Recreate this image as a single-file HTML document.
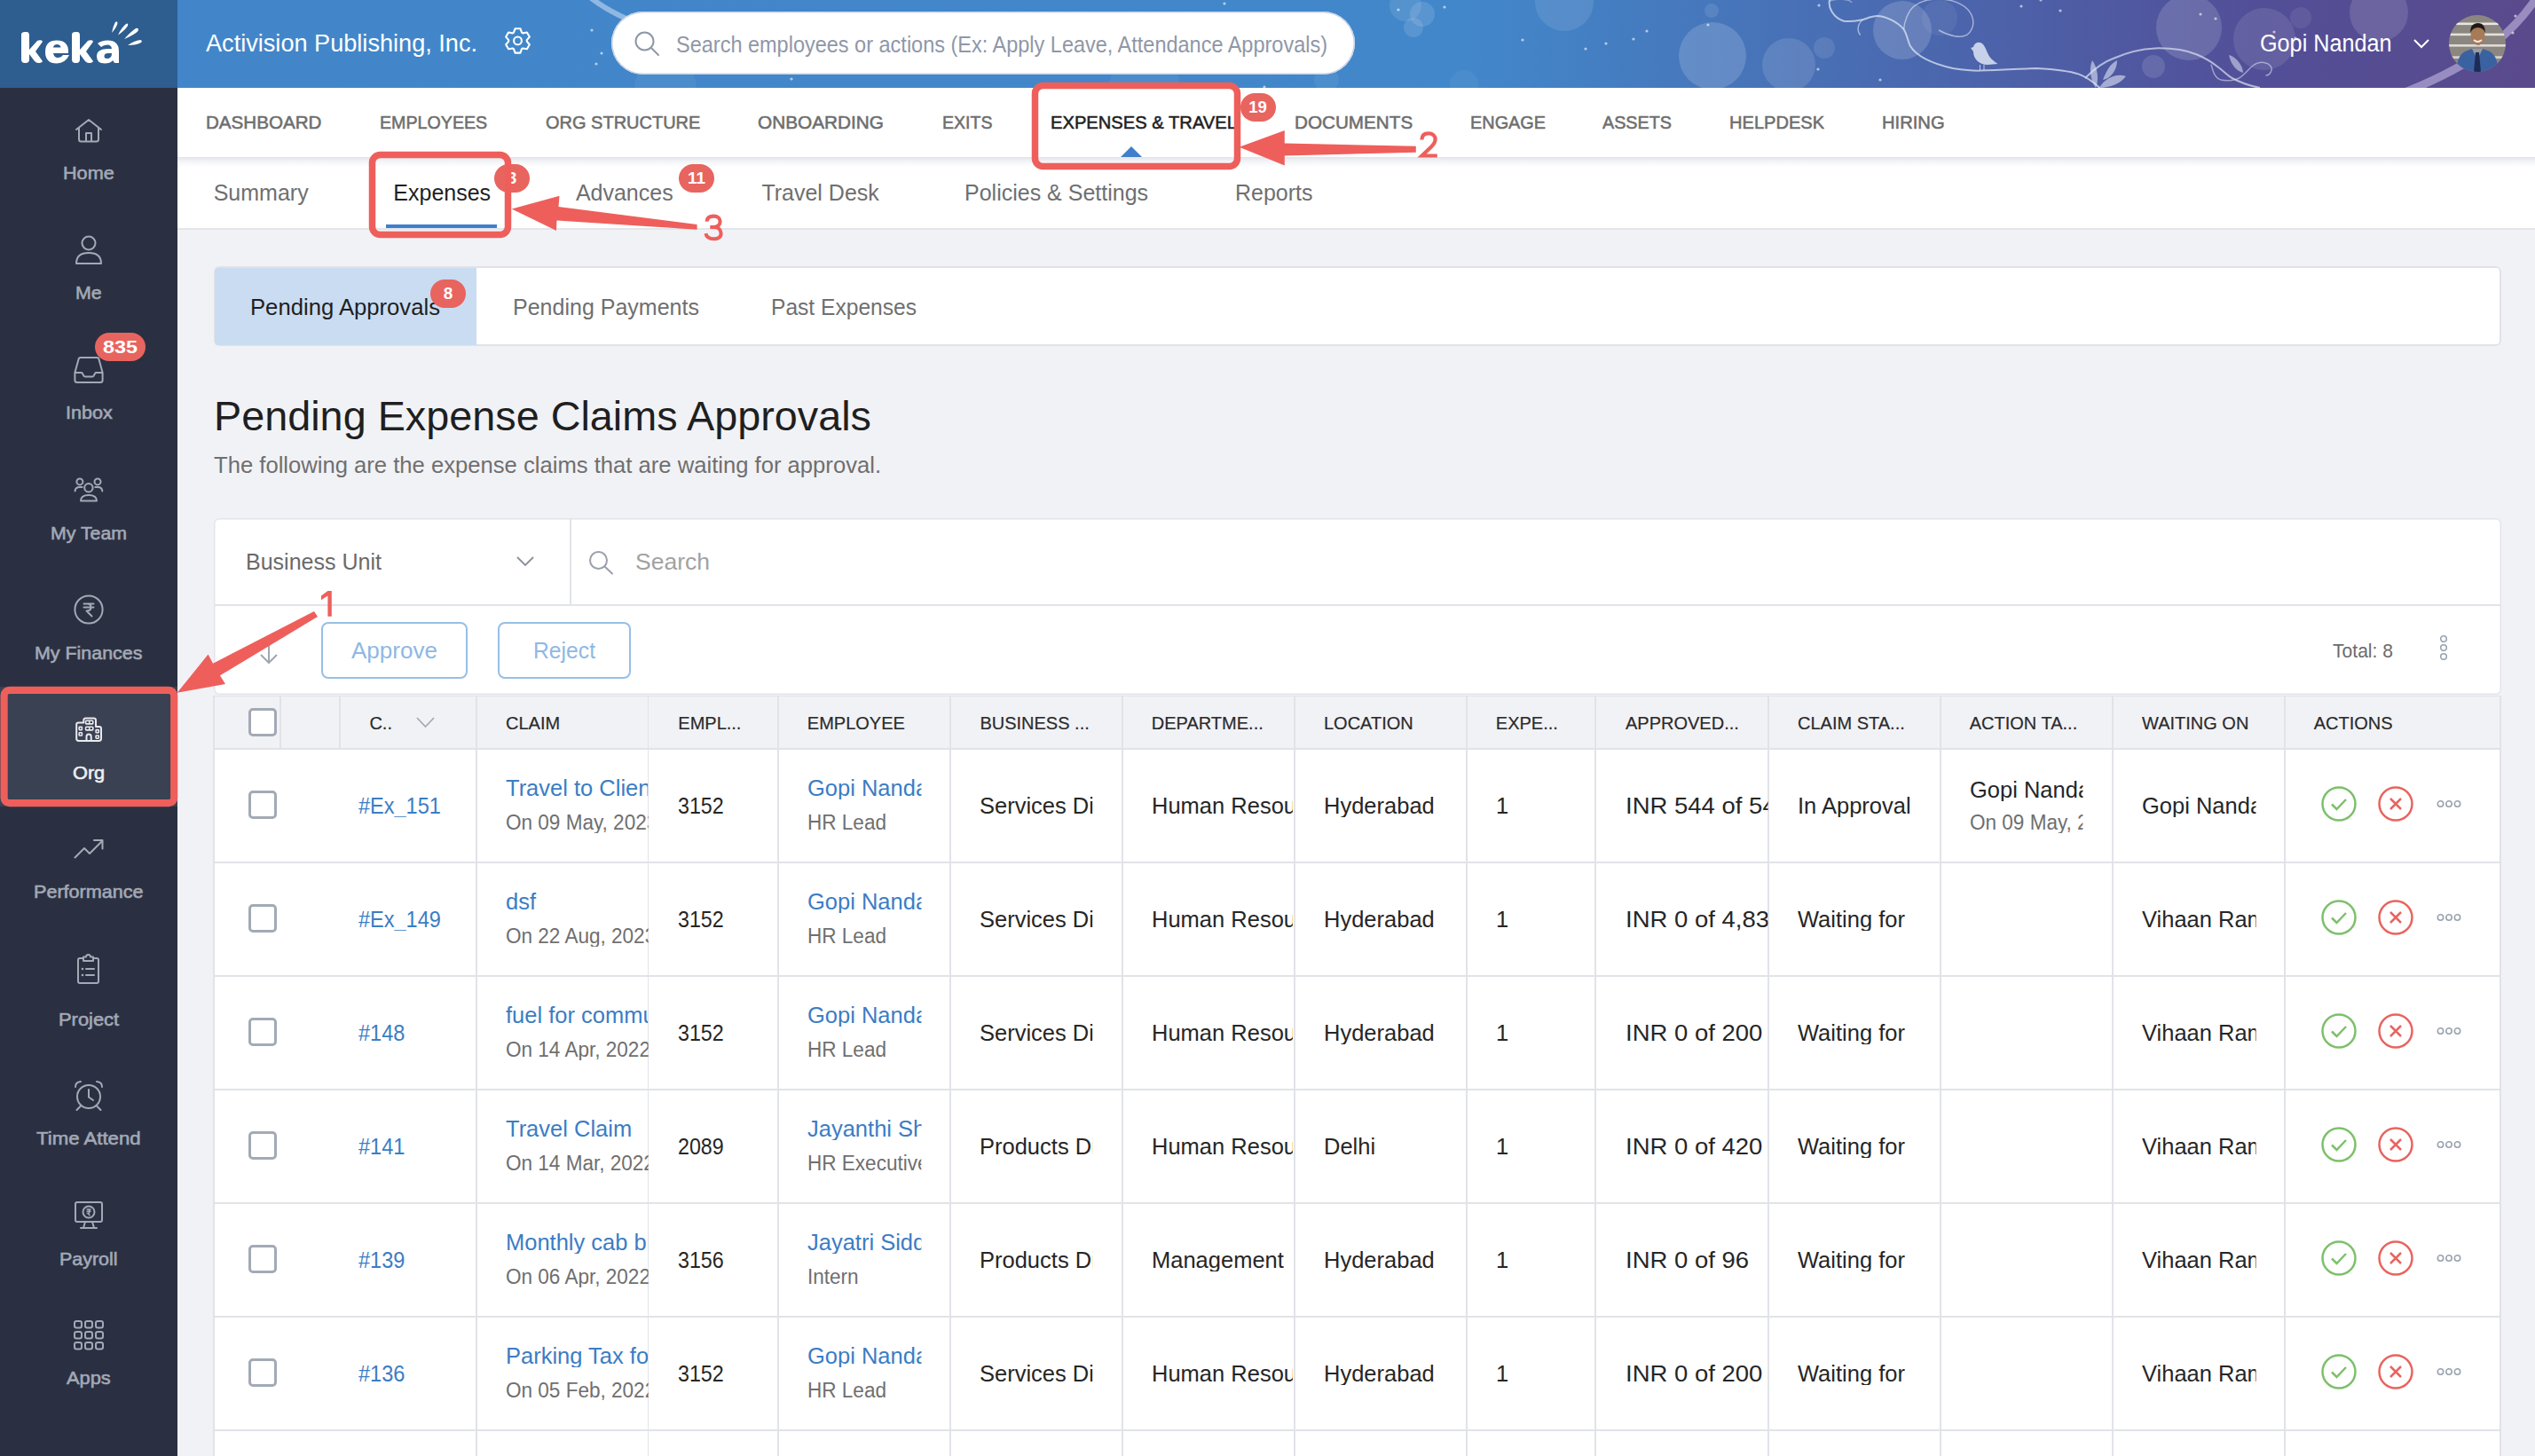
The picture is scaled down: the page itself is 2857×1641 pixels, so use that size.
<!DOCTYPE html>
<html><head><meta charset="utf-8">
<style>
html,body{margin:0;padding:0;}
body{width:2857px;height:1641px;position:relative;overflow:hidden;background:#f1f2f6;font-family:"Liberation Sans", sans-serif;}
.t{position:absolute;white-space:nowrap;line-height:1;}
svg{position:absolute;overflow:visible;}
</style></head><body>

<div style="position:absolute;left:0px;top:0px;width:200px;height:99px;background:#2e5d8f"></div>
<div style="position:absolute;left:200px;top:0px;width:2657px;height:99px;background:linear-gradient(90deg,#4286c9 0%,#4287ca 55%,#4b66ad 75%,#524f98 88%,#5a4a8c 100%)"></div>
<svg style="left:0;top:0" width="2857" height="99" viewBox="0 0 2857 99"><circle cx="1930" cy="63" r="38" fill="#ffffff" fill-opacity="0.16"/><circle cx="2016" cy="73" r="30" fill="#ffffff" fill-opacity="0.12"/><circle cx="2144" cy="34" r="33" fill="#ffffff" fill-opacity="0.16"/><circle cx="2186" cy="20" r="20" fill="#ffffff" fill-opacity="0.06"/><circle cx="1763" cy="2" r="33" fill="#ffffff" fill-opacity="0.1"/><circle cx="1603" cy="16" r="14" fill="#ffffff" fill-opacity="0.12"/><circle cx="1593" cy="31" r="11" fill="#ffffff" fill-opacity="0.12"/><circle cx="1584" cy="6" r="18" fill="#ffffff" fill-opacity="0.1"/><circle cx="1929" cy="12" r="8" fill="#ffffff" fill-opacity="0.1"/><circle cx="2056" cy="54" r="12" fill="#ffffff" fill-opacity="0.1"/><circle cx="2467" cy="31" r="37" fill="#ffffff" fill-opacity="0.15"/><circle cx="2552" cy="44" r="35" fill="#ffffff" fill-opacity="0.1"/><circle cx="2593" cy="20" r="12" fill="#ffffff" fill-opacity="0.08"/><circle cx="2681" cy="14" r="33" fill="#ffffff" fill-opacity="0.13"/><circle cx="2427" cy="75" r="13" fill="#ffffff" fill-opacity="0.12"/><circle cx="1650" cy="95" r="16" fill="#ffffff" fill-opacity="0.05"/><circle cx="750" cy="99" r="35" fill="#ffffff" fill-opacity="0.05"/><circle cx="1290" cy="99" r="40" fill="#ffffff" fill-opacity="0.05"/><circle cx="1495" cy="90" r="14" fill="#ffffff" fill-opacity="0.06"/><path d="M2062 0 C2060 8 2066 20 2078 23.7 C2088 25 2094 23 2100 22 C2106 20 2110 18 2115.7 18 C2124 18 2138 24 2145.6 33 C2150 40 2150 47 2153 52 C2158 60 2170 70 2200.8 77 C2215 79 2225 80 2232 79.6 C2260 79 2280 77 2295.5 77 C2315 78 2332 80 2343 83.6 C2352 87 2360 93 2366.5 99" stroke="#dde4f4" stroke-opacity="0.75" stroke-width="2" fill="none"/><path d="M2145.6 33 C2146 26 2150 12 2158 6.3 C2165 1 2172 -1 2185 -1 C2205 -1 2218 8 2222 17 C2226 26 2223 35 2216.6 39.4 C2210 43 2197 41 2185 34" stroke="#dde4f4" stroke-opacity="0.6" stroke-width="1.5" fill="none"/><path d="M2100 22 C2094 26 2092 34 2096.7 39.4" stroke="#dde4f4" stroke-opacity="0.6" stroke-width="1.5" fill="none"/><path d="M2062 1 C2070 -2 2085 -1 2087 3" stroke="#dde4f4" stroke-opacity="0.5" stroke-width="1.5" fill="none"/><path d="M2350 88 C2360 78 2370 70 2381.5 66 C2395 60 2412 55 2429 54.4 C2448 54 2465 57 2476 61.5 C2487 66 2494 71 2500 75.7 C2506 80 2510 85 2515.6 88 C2525 93 2537 97 2547 99" stroke="#dde4f4" stroke-opacity="0.7" stroke-width="2" fill="none"/><path d="M2492 72.6 C2494 80 2496 88 2503 90 C2512 92 2520 90 2523.5 88 C2530 84 2535 77 2539 74 C2544 70 2550 70 2553.5 71 C2558 72 2561 76 2560 79 C2559 83 2556 85 2553.5 85" stroke="#dde4f4" stroke-opacity="0.55" stroke-width="1.5" fill="none"/><path d="M2866 -14 C2840 30 2800 70 2700 108" stroke="#cdc3ea" stroke-opacity="0.55" stroke-width="9" fill="none"/><path d="M664 -4 C676 6 690 14 708 22" stroke="#cfe0f5" stroke-opacity="0.55" stroke-width="6" fill="none"/><path d="M2221 54 L2224 53 C2225 48 2231 46 2235 50 C2239 55 2240 62 2244 66 C2247 69 2250 71 2251.5 72 L2240 73 C2230 73 2224 66 2224 58 Z" fill="#dde4f4" fill-opacity="0.85"/><path d="M2231.5 73 V79 M2236 73 V79" stroke="#dde4f4" stroke-opacity="0.8" stroke-width="1"/><path d="M2512 62 C2520 64 2528 74 2528 82 C2520 80 2514 72 2512 62 Z" fill="#dde4f4" fill-opacity="0.55"/><path d="M2358 68 C2354 78 2356 90 2362 99 C2366 90 2364 76 2358 68 Z M2366 99 C2372 88 2386 82 2396 86 C2390 94 2378 99 2366 99 Z M2370 90 C2374 80 2378 72 2386 68 C2386 78 2380 88 2370 90 Z" fill="#dde4f4" fill-opacity="0.6"/><circle cx="1576" cy="11" r="1.6" fill="#ffffff" fill-opacity="0.6"/><circle cx="1628" cy="8" r="1.6" fill="#ffffff" fill-opacity="0.6"/><circle cx="1716" cy="45" r="1.6" fill="#ffffff" fill-opacity="0.6"/><circle cx="1787" cy="55" r="1.6" fill="#ffffff" fill-opacity="0.6"/><circle cx="1810" cy="49" r="1.6" fill="#ffffff" fill-opacity="0.6"/><circle cx="1841" cy="44" r="1.6" fill="#ffffff" fill-opacity="0.6"/><circle cx="1856" cy="35" r="1.6" fill="#ffffff" fill-opacity="0.6"/><circle cx="1925" cy="28" r="1.6" fill="#ffffff" fill-opacity="0.6"/><circle cx="2050" cy="6" r="1.6" fill="#ffffff" fill-opacity="0.6"/><circle cx="2049" cy="78" r="1.6" fill="#ffffff" fill-opacity="0.6"/><circle cx="2119" cy="90" r="1.6" fill="#ffffff" fill-opacity="0.6"/><circle cx="2278" cy="7" r="1.6" fill="#ffffff" fill-opacity="0.6"/><circle cx="2300" cy="0" r="1.6" fill="#ffffff" fill-opacity="0.6"/><circle cx="2322" cy="12" r="1.6" fill="#ffffff" fill-opacity="0.6"/><circle cx="2480" cy="16" r="1.6" fill="#ffffff" fill-opacity="0.6"/><circle cx="2497" cy="21" r="1.6" fill="#ffffff" fill-opacity="0.6"/><circle cx="2563" cy="36" r="1.6" fill="#ffffff" fill-opacity="0.6"/><circle cx="2587" cy="43" r="1.6" fill="#ffffff" fill-opacity="0.6"/><circle cx="2835" cy="18" r="1.6" fill="#ffffff" fill-opacity="0.6"/><circle cx="2832" cy="37" r="1.6" fill="#ffffff" fill-opacity="0.6"/><circle cx="667" cy="34" r="1.6" fill="#ffffff" fill-opacity="0.6"/><circle cx="678" cy="60" r="1.6" fill="#ffffff" fill-opacity="0.6"/><circle cx="672" cy="72" r="1.6" fill="#ffffff" fill-opacity="0.6"/><circle cx="892" cy="89" r="1.6" fill="#ffffff" fill-opacity="0.6"/><circle cx="1380" cy="4" r="1.6" fill="#ffffff" fill-opacity="0.6"/><circle cx="1425" cy="98" r="1.6" fill="#ffffff" fill-opacity="0.6"/><circle cx="1476" cy="50" r="1.6" fill="#ffffff" fill-opacity="0.6"/><circle cx="1512" cy="59" r="1.6" fill="#ffffff" fill-opacity="0.6"/></svg>
<svg style="left:0;top:0" width="200" height="99" viewBox="0 0 200 99">
<g fill="#ffffff">
<path d="M24 39 Q24 36 28 36 L30 36 Q33 36 33 40 L33 56 L42 46 Q44 45 47 45.5 L48 47 L40 58 L48 69 Q47 71 43 71 Q41 71 39 69 L33 61 L33 67 Q33 71 29 71 L28 71 Q24 71 24 67 Z"/>
<path d="M78 62 Q74 71 64 71.5 Q51 71.5 51 58.5 Q51 45.5 64 45.5 Q77 45.5 77 58 L77 60 L60 60 Q61 65 65 65 Q69 65 71 62 Z M60 53.5 L68.5 53.5 Q68 50 64.2 50 Q60.5 50 60 53.5 Z"/>
<path d="M81 39 Q81 36 85 36 L87 36 Q90 36 90 40 L90 56 L99 46 Q101 45 104 45.5 L105 47 L97 58 L105 69 Q104 71 100 71 Q98 71 96 69 L90 61 L90 67 Q90 71 86 71 L85 71 Q81 71 81 67 Z"/>
<path d="M134 71 L130 71 Q128 71 127.5 68 Q124 71.5 118 71.5 Q109 71.5 109 63.5 Q109 55 122 55 L126 55 Q125.5 50.5 121 50.5 Q116.5 50.5 114 53 L110 49 Q114 45.5 121.5 45.5 Q134 45.5 134 58 Z M126 60 L121.5 60 Q117.5 60 117.5 63.5 Q117.5 66 120.5 66 Q126 66 126 60 Z"/>
<path d="M126 37 Q128 28 130 25 Q132 23 132.5 26 Q132 30 126 37 Z"/>
<path d="M133 39.5 Q137 31 142 27 Q145 25.5 144 29 Q141 34 133 39.5 Z"/>
<path d="M140 44 Q147 36 153 32 Q157 31 155.5 35 Q152 39 140 44 Z"/>
<path d="M144 51 Q151 46 158 45 Q161 45.5 159 48 Q154 51 144 51 Z"/>
</g></svg>
<div class="t " style="left:232px;top:36.44px;font-size:27px;color:#ffffff;font-weight:400;transform:scaleX(1.0044);transform-origin:0 0;">Activision Publishing, Inc.</div>
<svg style="left:0;top:0" width="700" height="99" viewBox="0 0 700 99"><path d="M578.98 36.64 L580.59 32.21 L586.41 32.21 L588.02 36.64 L589.26 37.36 L593.90 36.53 L596.81 41.57 L593.77 45.18 L593.77 46.62 L596.81 50.23 L593.90 55.27 L589.26 54.44 L588.02 55.16 L586.41 59.59 L580.59 59.59 L578.98 55.16 L577.74 54.44 L573.10 55.27 L570.19 50.23 L573.23 46.62 L573.23 45.18 L570.19 41.57 L573.10 36.53 L577.74 37.36 Z" fill="none" stroke="#ffffff" stroke-width="2.1" stroke-linejoin="round"/><circle cx="583.5" cy="45.9" r="4.4" fill="none" stroke="#ffffff" stroke-width="2.1"/></svg>
<div style="position:absolute;left:689px;top:13px;width:838px;height:71px;background:#fff;border-radius:36px;box-shadow:0 0 0 1.5px #c9d3e6 inset"></div>
<svg style="left:714px;top:34px" width="30" height="30" viewBox="0 0 30 30"><circle cx="12.5" cy="12.5" r="10" fill="none" stroke="#8e97a8" stroke-width="2"/><path d="M20 20 L28 28" stroke="#8e97a8" stroke-width="2" stroke-linecap="round"/></svg>
<div class="t " style="left:762px;top:38.04px;font-size:25px;color:#8f97a8;font-weight:400;transform:scaleX(0.9398);transform-origin:0 0;">Search employees or actions (Ex: Apply Leave, Attendance Approvals)</div>
<div class="t " style="left:2547px;top:35.64px;font-size:27px;color:#ffffff;font-weight:400;transform:scaleX(0.9333);transform-origin:0 0;">Gopi Nandan</div>
<svg style="left:2720px;top:44px" width="18" height="11" viewBox="0 0 18 11"><path d="M1 1 L9 9 L17 1" stroke="#fff" stroke-width="2" fill="none"/></svg>
<svg style="left:2760px;top:17px" width="64" height="64" viewBox="0 0 64 64">
<defs><clipPath id="av"><circle cx="32" cy="32" r="32"/></clipPath></defs>
<g clip-path="url(#av)">
<rect width="64" height="64" fill="#8b8780"/>
<rect y="8.5" width="64" height="2.6" fill="#e8e6e2"/><rect y="20.6" width="64" height="2.6" fill="#e3e1dc"/><rect y="33" width="64" height="2.6" fill="#dedcd6"/><rect y="46.3" width="64" height="2.6" fill="#d6d4ce"/>
<path d="M8 64 Q9 46 18 41 L26 38 L38 38 L46 41 Q55 46 56 64 Z" fill="#3b62a0"/>
<path d="M26 38 L32 50 L38 38 Z" fill="#9a9aa6"/>
<path d="M30 42 L34 42 L36 64 L28 64 Z" fill="#1d2d55"/>
<ellipse cx="32.5" cy="23" rx="8" ry="11" fill="#a87a58"/>
<path d="M24 20 Q24 9 32.5 9 Q41 9 41 20 Q38 14 32.5 14 Q27 14 24 20Z" fill="#201812"/>
<path d="M28 28 Q32.5 32 37 28" stroke="#f2ece4" stroke-width="2" fill="none"/>
</g></svg>
<div style="position:absolute;left:0px;top:99px;width:200px;height:1542px;background:#2a3042"></div>
<div style="position:absolute;left:0px;top:774px;width:200px;height:135px;background:#3a4152"></div>
<svg style="left:84px;top:133px" width="32" height="28" viewBox="0 0 32 28"><path fill="none" stroke="#a3a9b5" stroke-width="2" stroke-linecap="round" stroke-linejoin="round" d="M2 13 L16 2 L30 13 M5 11 V24 Q5 26.5 7.5 26.5 H24.5 Q27 26.5 27 24 V11 M13 26.5 V17 H19 V26.5"/></svg>
<svg style="left:84px;top:265px" width="32" height="34" viewBox="0 0 32 34"><circle cx="16" cy="9" r="7.5" fill="none" stroke="#a3a9b5" stroke-width="2" stroke-linecap="round" stroke-linejoin="round"/><path fill="none" stroke="#a3a9b5" stroke-width="2" stroke-linecap="round" stroke-linejoin="round" d="M2 32 Q2 20 16 20 Q30 20 30 32 Z"/></svg>
<svg style="left:83px;top:401px" width="34" height="31" viewBox="0 0 34 31"><path fill="none" stroke="#a3a9b5" stroke-width="2" stroke-linecap="round" stroke-linejoin="round" d="M5.5 4 Q5.8 2 8 2 H26 Q28.2 2 28.5 4 L32.6 19 V27.5 Q32.6 30 30.1 30 H3.9 Q1.4 30 1.4 27.5 V19 Z M1.4 19 H9.3 L11.6 22.8 Q12.3 23.6 13.3 23.6 H20.7 Q21.7 23.6 22.4 22.8 L24.7 19 H32.6"/></svg>
<svg style="left:83px;top:537px" width="34" height="29" viewBox="0 0 34 29"><circle cx="6.9" cy="5.9" r="3.5" fill="none" stroke="#a3a9b5" stroke-width="2" stroke-linecap="round" stroke-linejoin="round"/><circle cx="27" cy="5.9" r="3.5" fill="none" stroke="#a3a9b5" stroke-width="2" stroke-linecap="round" stroke-linejoin="round"/><circle cx="16.9" cy="12.7" r="4.7" fill="none" stroke="#a3a9b5" stroke-width="2" stroke-linecap="round" stroke-linejoin="round"/><path fill="none" stroke="#a3a9b5" stroke-width="2" stroke-linecap="round" stroke-linejoin="round" d="M8 27.5 C8 23 11 21 16.9 21 C23 21 26 23 26 27.5 Z M1.6 16.6 Q1.6 12 7 12 H9.6 M32.3 16.6 Q32.3 12 27 12 H24.3"/></svg>
<svg style="left:83px;top:670px" width="34" height="34" viewBox="0 0 34 34"><circle cx="17" cy="17" r="15.6" fill="none" stroke="#a3a9b5" stroke-width="2" stroke-linecap="round" stroke-linejoin="round"/><path fill="none" stroke="#a3a9b5" stroke-width="2" stroke-linecap="round" stroke-linejoin="round" d="M11.5 10.5 H22.5 M11.5 14.5 H22.5 M15 10.5 Q19.5 10.5 19.5 14.5 Q19.5 18.5 14.5 18.5 L20.5 24.5"/></svg>
<svg style="left:0;top:0" width="200" height="900" viewBox="0 0 200 900"><g fill="none" stroke="#e9eaee" stroke-width="2" stroke-linejoin="round">
<path d="M86.2 832.6 V816.6 Q86.2 814.4 88.4 814.4 H94.3 V811.8 Q94.3 809.4 96.7 809.4 H105.6 Q108 809.4 108 811.8 V819 H111.8 Q114 819 114 821.2 V832.6 Q114 835 111.6 835 H88.6 Q86.2 835 86.2 832.6 Z"/>
<path d="M97.5 835 V830.2 Q97.5 827.6 100.1 827.6 Q102.7 827.6 102.7 830.2 V835"/>
</g><g fill="none" stroke="#e9eaee" stroke-width="1.6">
<rect x="96.6" y="812.3" width="8.2" height="3.6" rx="0.8"/><path d="M100.7 812.3 V815.9"/>
<rect x="96.6" y="819.3" width="8.2" height="3.6" rx="0.8"/><path d="M100.7 819.3 V822.9"/>
<rect x="89.2" y="819.4" width="3.2" height="3.2" rx="0.6"/><rect x="89.2" y="825.8" width="3.2" height="3.2" rx="0.6"/>
<rect x="108.1" y="822.6" width="3.2" height="3.2" rx="0.6"/><rect x="108.1" y="829" width="3.2" height="3.2" rx="0.6"/>
</g></svg>
<svg style="left:83px;top:945px" width="34" height="23" viewBox="0 0 34 23"><path fill="none" stroke="#a3a9b5" stroke-width="2" stroke-linecap="round" stroke-linejoin="round" d="M1.5 21.5 L12 11 L18 17 L32 3 M23 2 H32.5 V11.5"/></svg>
<svg style="left:86px;top:1075px" width="27" height="35" viewBox="0 0 27 35"><path fill="none" stroke="#a3a9b5" stroke-width="2" stroke-linecap="round" stroke-linejoin="round" d="M8 5 H4 Q2 5 2 7 V31 Q2 33 4 33 H23 Q25 33 25 31 V7 Q25 5 23 5 H19 M8 3.5 H11 Q11 1 13.5 1 Q16 1 16 3.5 H19 V8 H8 Z M11 17 H20 M11 24 H20"/><circle cx="7" cy="17" r="1.3" fill="#a3a9b5"/><circle cx="7" cy="24" r="1.3" fill="#a3a9b5"/></svg>
<svg style="left:83px;top:1217px" width="34" height="35" viewBox="0 0 34 35"><circle cx="17" cy="19" r="13" fill="none" stroke="#a3a9b5" stroke-width="2" stroke-linecap="round" stroke-linejoin="round"/><path fill="none" stroke="#a3a9b5" stroke-width="2" stroke-linecap="round" stroke-linejoin="round" d="M17 11 V19.5 L22 23 M2 8 Q2 2.5 8 2 M32 8 Q32 2.5 26 2 M7.5 30 L3.5 34 M26.5 30 L30.5 34"/></svg>
<svg style="left:83px;top:1353px" width="34" height="33" viewBox="0 0 34 33"><path fill="none" stroke="#a3a9b5" stroke-width="2" stroke-linecap="round" stroke-linejoin="round" d="M4 2 H30 Q32 2 32 4 V22 Q32 24 30 24 H4 Q2 24 2 22 V4 Q2 2 4 2 Z M13 24 L11 31 M21 24 L23 31 M8 31 H26"/><circle cx="17" cy="13" r="6.5" fill="none" stroke="#a3a9b5" stroke-width="2" stroke-linecap="round" stroke-linejoin="round"/><path stroke="#a3a9b5" stroke-width="1.5" fill="none" d="M14.5 10 H19.5 M14.5 12.3 H19.5 M16 10 Q18 10 18 12.3 Q18 14.5 15.8 14.5 L18.5 17"/></svg>
<svg style="left:82px;top:1487px" width="36" height="35" viewBox="0 0 36 35"><rect x="2" y="2" width="8" height="7.5" rx="2.3" fill="none" stroke="#a3a9b5" stroke-width="2"/><rect x="14" y="2" width="8" height="7.5" rx="2.3" fill="none" stroke="#a3a9b5" stroke-width="2"/><rect x="26" y="2" width="8" height="7.5" rx="2.3" fill="none" stroke="#a3a9b5" stroke-width="2"/><rect x="2" y="14" width="8" height="7.5" rx="2.3" fill="none" stroke="#a3a9b5" stroke-width="2"/><rect x="14" y="14" width="8" height="7.5" rx="2.3" fill="none" stroke="#a3a9b5" stroke-width="2"/><rect x="26" y="14" width="8" height="7.5" rx="2.3" fill="none" stroke="#a3a9b5" stroke-width="2"/><rect x="2" y="26" width="8" height="7.5" rx="2.3" fill="none" stroke="#a3a9b5" stroke-width="2"/><rect x="14" y="26" width="8" height="7.5" rx="2.3" fill="none" stroke="#a3a9b5" stroke-width="2"/><rect x="26" y="26" width="8" height="7.5" rx="2.3" fill="none" stroke="#a3a9b5" stroke-width="2"/></svg>
<div class="t " style="left:71.15px;top:184.42px;font-size:21px;color:#a3a9b5;font-weight:400;transform:scaleX(1.0300);transform-origin:0 0;-webkit-text-stroke:0.6px #a3a9b5">Home</div>
<div class="t " style="left:85.15px;top:319.02px;font-size:21px;color:#a3a9b5;font-weight:400;transform:scaleX(1.0180);transform-origin:0 0;-webkit-text-stroke:0.6px #a3a9b5">Me</div>
<div class="t " style="left:73.65px;top:454.22px;font-size:21px;color:#a3a9b5;font-weight:400;transform:scaleX(1.0258);transform-origin:0 0;-webkit-text-stroke:0.6px #a3a9b5">Inbox</div>
<div class="t " style="left:57.0px;top:589.72px;font-size:21px;color:#a3a9b5;font-weight:400;transform:scaleX(1.0141);transform-origin:0 0;-webkit-text-stroke:0.6px #a3a9b5">My Team</div>
<div class="t " style="left:39.3px;top:725.22px;font-size:21px;color:#a3a9b5;font-weight:400;transform:scaleX(1.0198);transform-origin:0 0;-webkit-text-stroke:0.6px #a3a9b5">My Finances</div>
<div class="t " style="left:81.9px;top:859.72px;font-size:21px;color:#eceef1;font-weight:400;transform:scaleX(1.0341);transform-origin:0 0;-webkit-text-stroke:0.6px #eceef1">Org</div>
<div class="t " style="left:38.2px;top:994.22px;font-size:21px;color:#a3a9b5;font-weight:400;transform:scaleX(1.0281);transform-origin:0 0;-webkit-text-stroke:0.6px #a3a9b5">Performance</div>
<div class="t " style="left:65.95px;top:1137.72px;font-size:21px;color:#a3a9b5;font-weight:400;transform:scaleX(1.0419);transform-origin:0 0;-webkit-text-stroke:0.6px #a3a9b5">Project</div>
<div class="t " style="left:41.2px;top:1272.22px;font-size:21px;color:#a3a9b5;font-weight:400;transform:scaleX(1.0568);transform-origin:0 0;-webkit-text-stroke:0.6px #a3a9b5">Time Attend</div>
<div class="t " style="left:67.2px;top:1407.72px;font-size:21px;color:#a3a9b5;font-weight:400;transform:scaleX(1.0219);transform-origin:0 0;-webkit-text-stroke:0.6px #a3a9b5">Payroll</div>
<div class="t " style="left:75.15px;top:1542.22px;font-size:21px;color:#a3a9b5;font-weight:400;transform:scaleX(1.0383);transform-origin:0 0;-webkit-text-stroke:0.6px #a3a9b5">Apps</div>
<div class="t" style="left:107px;top:375px;width:57px;height:32px;border-radius:16.0px;background:#e8645f;color:#fff;font-size:21px;line-height:32px;text-align:center;font-weight:700"><span style="display:inline-block;transform:scaleX(1.113);">835</span></div>
<div style="position:absolute;left:200px;top:99px;width:2657px;height:78px;background:#fff"></div>
<div class="t" style="left:232.4px;top:126.62px;width:1182.0px;overflow:hidden;font-size:21px;font-weight:400;-webkit-text-stroke:0.55px #6e6e6e;color:#6e6e6e;transform:scaleX(0.9802);transform-origin:0 0">DASHBOARD</div>
<div class="t" style="left:428.4px;top:126.62px;width:1028.9px;overflow:hidden;font-size:21px;font-weight:400;-webkit-text-stroke:0.55px #6e6e6e;color:#6e6e6e;transform:scaleX(0.9355);transform-origin:0 0">EMPLOYEES</div>
<div class="t" style="left:614.6px;top:126.62px;width:815.4px;overflow:hidden;font-size:21px;font-weight:400;-webkit-text-stroke:0.55px #6e6e6e;color:#6e6e6e;transform:scaleX(0.9521);transform-origin:0 0">ORG STRUCTURE</div>
<div class="t" style="left:854.4px;top:126.62px;width:542.3px;overflow:hidden;font-size:21px;font-weight:400;-webkit-text-stroke:0.55px #6e6e6e;color:#6e6e6e;transform:scaleX(0.9894);transform-origin:0 0">ONBOARDING</div>
<div class="t" style="left:1061.5px;top:126.62px;width:353.9px;overflow:hidden;font-size:21px;font-weight:400;-webkit-text-stroke:0.55px #6e6e6e;color:#6e6e6e;transform:scaleX(0.9310);transform-origin:0 0">EXITS</div>
<div class="t" style="left:1183.8px;top:126.62px;width:215.7px;overflow:hidden;font-size:21px;font-weight:400;-webkit-text-stroke:0.55px #1f1f1f;color:#1f1f1f;transform:scaleX(0.9604);transform-origin:0 0">EXPENSES &amp; TRAVEL</div>
<div class="t" style="left:1458.8px;top:126.62px;width:-68.9px;overflow:hidden;font-size:21px;font-weight:400;-webkit-text-stroke:0.55px #6e6e6e;color:#6e6e6e;transform:scaleX(0.9842);transform-origin:0 0">DOCUMENTS</div>
<div class="t" style="left:1656.9px;top:126.62px;width:-280.8px;overflow:hidden;font-size:21px;font-weight:400;-webkit-text-stroke:0.55px #6e6e6e;color:#6e6e6e;transform:scaleX(0.9471);transform-origin:0 0">ENGAGE</div>
<div class="t" style="left:1806px;top:126.62px;width:-440.9px;overflow:hidden;font-size:21px;font-weight:400;-webkit-text-stroke:0.55px #6e6e6e;color:#6e6e6e;transform:scaleX(0.9413);transform-origin:0 0">ASSETS</div>
<div class="t" style="left:1948.6px;top:126.62px;width:-583.4px;overflow:hidden;font-size:21px;font-weight:400;-webkit-text-stroke:0.55px #6e6e6e;color:#6e6e6e;transform:scaleX(0.9558);transform-origin:0 0">HELPDESK</div>
<div class="t" style="left:2121px;top:126.62px;width:-760.0px;overflow:hidden;font-size:21px;font-weight:400;-webkit-text-stroke:0.55px #6e6e6e;color:#6e6e6e;transform:scaleX(0.9605);transform-origin:0 0">HIRING</div>
<svg style="left:1261px;top:165px" width="28" height="14" viewBox="0 0 28 14"><path d="M0 14 L14 0 L28 14 Z" fill="#3f7fcb"/></svg>
<div class="t" style="left:1398px;top:105px;width:40px;height:32px;border-radius:16.0px;background:#e8645f;color:#fff;font-size:19px;line-height:32px;text-align:center;font-weight:700"><span style="display:inline-block;transform:scaleX(0.979);">19</span></div>
<div style="position:absolute;left:200px;top:177px;width:2657px;height:80px;background:#fff"></div>
<div style="position:absolute;left:200px;top:177px;width:2657px;height:11px;background:linear-gradient(#e2e4ea,#f3f4f7 45%,#fff)"></div>
<div style="position:absolute;left:200px;top:257px;width:2657px;height:1.5px;background:#e3e5ea"></div>
<div class="t " style="left:240.7px;top:204.84px;font-size:25px;color:#6f6f6f;font-weight:400;">Summary</div>
<div class="t " style="left:443.3px;top:204.84px;font-size:25px;color:#1f1f1f;font-weight:400;">Expenses</div>
<div class="t " style="left:648.9px;top:204.84px;font-size:25px;color:#6f6f6f;font-weight:400;">Advances</div>
<div class="t " style="left:858.4px;top:204.84px;font-size:25px;color:#6f6f6f;font-weight:400;">Travel Desk</div>
<div class="t " style="left:1087px;top:204.84px;font-size:25px;color:#6f6f6f;font-weight:400;">Policies &amp; Settings</div>
<div class="t " style="left:1392px;top:204.84px;font-size:25px;color:#6f6f6f;font-weight:400;">Reports</div>
<div style="position:absolute;left:435px;top:253px;width:125px;height:4px;background:#3f7fcb"></div>
<div class="t" style="left:557px;top:185px;width:40px;height:32px;border-radius:16.0px;background:#e8645f;color:#fff;font-size:19px;line-height:32px;text-align:center;font-weight:700"><span style="">3</span></div>
<div class="t" style="left:765px;top:185px;width:40px;height:32px;border-radius:16.0px;background:#e8645f;color:#fff;font-size:19px;line-height:32px;text-align:center;font-weight:700"><span style="">11</span></div>
<div style="position:absolute;left:241px;top:300px;width:2578px;height:90px;background:#fff;box-shadow:0 0 0 2px #e1e2e7 inset;border-radius:6px"></div>
<div style="position:absolute;left:242px;top:301.5px;width:295px;height:87.5px;background:#c9dcf2;border-radius:4px 0 0 4px"></div>
<div class="t " style="left:282px;top:332.99px;font-size:26px;color:#1f1f1f;font-weight:400;transform:scaleX(0.9869);transform-origin:0 0;">Pending Approvals</div>
<div class="t" style="left:485px;top:315px;width:40px;height:32px;border-radius:16.0px;background:#e8645f;color:#fff;font-size:19px;line-height:32px;text-align:center;font-weight:700"><span style="">8</span></div>
<div class="t " style="left:577.5px;top:332.99px;font-size:26px;color:#6f6f6f;font-weight:400;transform:scaleX(0.9622);transform-origin:0 0;">Pending Payments</div>
<div class="t " style="left:869px;top:332.99px;font-size:26px;color:#6f6f6f;font-weight:400;transform:scaleX(0.9456);transform-origin:0 0;">Past Expenses</div>
<div class="t " style="left:241px;top:445.21px;font-size:47px;color:#1f1f1f;font-weight:400;transform:scaleX(0.9951);transform-origin:0 0;">Pending Expense Claims Approvals</div>
<div class="t " style="left:241px;top:510.99px;font-size:26px;color:#6f6f6f;font-weight:400;transform:scaleX(0.9855);transform-origin:0 0;">The following are the expense claims that are waiting for approval.</div>
<div style="position:absolute;left:241px;top:584px;width:2578px;height:199px;background:#fff;box-shadow:0 0 0 1.5px #e2e4ea inset;border-radius:6px"></div>
<div style="position:absolute;left:642px;top:584px;width:1.5px;height:98px;background:#e2e4ea"></div>
<div style="position:absolute;left:241px;top:681px;width:2578px;height:1.5px;background:#e2e4ea"></div>
<div class="t " style="left:277px;top:621.34px;font-size:25px;color:#6a6a6a;font-weight:400;transform:scaleX(1.0010);transform-origin:0 0;">Business Unit</div>
<svg style="left:582px;top:627px" width="20" height="11" viewBox="0 0 20 11"><path d="M1 1 L10 10 L19 1" stroke="#8a8f99" stroke-width="1.8" fill="none"/></svg>
<svg style="left:663px;top:620px" width="30" height="28" viewBox="0 0 30 28"><circle cx="11.5" cy="11.5" r="9.5" fill="none" stroke="#9aa0aa" stroke-width="2"/><path d="M18.5 18.5 L27 26.5" stroke="#9aa0aa" stroke-width="2" stroke-linecap="round"/></svg>
<div class="t " style="left:716px;top:620.49px;font-size:26px;color:#a2a2a2;font-weight:400;transform:scaleX(1.0196);transform-origin:0 0;">Search</div>
<svg style="left:292px;top:718px" width="22" height="31" viewBox="0 0 22 31"><path d="M11 1 V29 M2 20 L11 29 L20 20" stroke="#a0a7b2" stroke-width="2" fill="none"/></svg>
<div style="position:absolute;left:362px;top:701px;width:165px;height:64px;border:2px solid #97bfe6;border-radius:8px;box-sizing:border-box"></div>
<div class="t " style="left:395.7px;top:720.49px;font-size:26px;color:#8fb8e2;font-weight:400;transform:scaleX(1.0016);transform-origin:0 0;">Approve</div>
<div style="position:absolute;left:561px;top:701px;width:150px;height:64px;border:2px solid #97bfe6;border-radius:8px;box-sizing:border-box"></div>
<div class="t " style="left:600.7px;top:720.49px;font-size:26px;color:#8fb8e2;font-weight:400;transform:scaleX(0.9498);transform-origin:0 0;">Reject</div>
<div class="t " style="left:2629.4px;top:722.68px;font-size:22px;color:#6b6b6b;font-weight:400;transform:scaleX(0.9587);transform-origin:0 0;">Total: 8</div>
<svg style="left:2748px;top:715px" width="12" height="30" viewBox="0 0 12 30"><circle cx="6" cy="5" r="3.3" fill="none" stroke="#9aa3b0" stroke-width="1.6"/><circle cx="6" cy="15" r="3.3" fill="none" stroke="#9aa3b0" stroke-width="1.6"/><circle cx="6" cy="25" r="3.3" fill="none" stroke="#9aa3b0" stroke-width="1.6"/></svg>
<div style="position:absolute;left:241px;top:783.5px;width:2577px;height:857.5px;background:#fff"></div>
<div style="position:absolute;left:241px;top:783.5px;width:2577px;height:60.5px;background:#f1f2f6"></div>
<div style="position:absolute;left:241px;top:783.5px;width:2577px;height:1.5px;background:#e1e3e8"></div>
<div style="position:absolute;left:241px;top:843.25px;width:2577px;height:1.5px;background:#e1e3e8"></div>
<div style="position:absolute;left:241px;top:971.25px;width:2577px;height:1.5px;background:#e1e3e8"></div>
<div style="position:absolute;left:241px;top:1099.25px;width:2577px;height:1.5px;background:#e1e3e8"></div>
<div style="position:absolute;left:241px;top:1227.25px;width:2577px;height:1.5px;background:#e1e3e8"></div>
<div style="position:absolute;left:241px;top:1355.25px;width:2577px;height:1.5px;background:#e1e3e8"></div>
<div style="position:absolute;left:241px;top:1483.25px;width:2577px;height:1.5px;background:#e1e3e8"></div>
<div style="position:absolute;left:241px;top:1611.25px;width:2577px;height:1.5px;background:#e1e3e8"></div>
<div style="position:absolute;left:240.25px;top:783.5px;width:1.5px;height:60.5px;background:#e1e3e8"></div>
<div style="position:absolute;left:315.25px;top:783.5px;width:1.5px;height:60.5px;background:#e1e3e8"></div>
<div style="position:absolute;left:382.25px;top:783.5px;width:1.5px;height:60.5px;background:#e1e3e8"></div>
<div style="position:absolute;left:536.25px;top:783.5px;width:1.5px;height:60.5px;background:#e1e3e8"></div>
<div style="position:absolute;left:729.75px;top:783.5px;width:1.5px;height:60.5px;background:#e1e3e8"></div>
<div style="position:absolute;left:876.25px;top:783.5px;width:1.5px;height:60.5px;background:#e1e3e8"></div>
<div style="position:absolute;left:1070.25px;top:783.5px;width:1.5px;height:60.5px;background:#e1e3e8"></div>
<div style="position:absolute;left:1264.25px;top:783.5px;width:1.5px;height:60.5px;background:#e1e3e8"></div>
<div style="position:absolute;left:1458.25px;top:783.5px;width:1.5px;height:60.5px;background:#e1e3e8"></div>
<div style="position:absolute;left:1652.25px;top:783.5px;width:1.5px;height:60.5px;background:#e1e3e8"></div>
<div style="position:absolute;left:1797.25px;top:783.5px;width:1.5px;height:60.5px;background:#e1e3e8"></div>
<div style="position:absolute;left:1992.25px;top:783.5px;width:1.5px;height:60.5px;background:#e1e3e8"></div>
<div style="position:absolute;left:2186.25px;top:783.5px;width:1.5px;height:60.5px;background:#e1e3e8"></div>
<div style="position:absolute;left:2380.25px;top:783.5px;width:1.5px;height:60.5px;background:#e1e3e8"></div>
<div style="position:absolute;left:2574.25px;top:783.5px;width:1.5px;height:60.5px;background:#e1e3e8"></div>
<div style="position:absolute;left:2817.25px;top:783.5px;width:1.5px;height:60.5px;background:#e1e3e8"></div>
<div style="position:absolute;left:240.25px;top:844px;width:1.5px;height:797px;background:#e1e3e8"></div>
<div style="position:absolute;left:536.25px;top:844px;width:1.5px;height:797px;background:#e1e3e8"></div>
<div style="position:absolute;left:729.75px;top:844px;width:1.5px;height:797px;background:#e1e3e8"></div>
<div style="position:absolute;left:876.25px;top:844px;width:1.5px;height:797px;background:#e1e3e8"></div>
<div style="position:absolute;left:1070.25px;top:844px;width:1.5px;height:797px;background:#e1e3e8"></div>
<div style="position:absolute;left:1264.25px;top:844px;width:1.5px;height:797px;background:#e1e3e8"></div>
<div style="position:absolute;left:1458.25px;top:844px;width:1.5px;height:797px;background:#e1e3e8"></div>
<div style="position:absolute;left:1652.25px;top:844px;width:1.5px;height:797px;background:#e1e3e8"></div>
<div style="position:absolute;left:1797.25px;top:844px;width:1.5px;height:797px;background:#e1e3e8"></div>
<div style="position:absolute;left:1992.25px;top:844px;width:1.5px;height:797px;background:#e1e3e8"></div>
<div style="position:absolute;left:2186.25px;top:844px;width:1.5px;height:797px;background:#e1e3e8"></div>
<div style="position:absolute;left:2380.25px;top:844px;width:1.5px;height:797px;background:#e1e3e8"></div>
<div style="position:absolute;left:2574.25px;top:844px;width:1.5px;height:797px;background:#e1e3e8"></div>
<div style="position:absolute;left:2817.25px;top:844px;width:1.5px;height:797px;background:#e1e3e8"></div>
<div style="position:absolute;left:280px;top:798px;width:32px;height:32px;border:3px solid #a3aab6;border-radius:5px;box-sizing:border-box;background:#fff"></div>
<div class="t " style="left:416.4px;top:804.87px;font-size:20px;color:#2b2b2b;font-weight:400;-webkit-text-stroke:0.2px #2b2b2b">C..</div>
<div class="t " style="left:570px;top:804.87px;font-size:20px;color:#2b2b2b;font-weight:400;-webkit-text-stroke:0.2px #2b2b2b">CLAIM</div>
<div class="t " style="left:764.3px;top:804.87px;font-size:20px;color:#2b2b2b;font-weight:400;-webkit-text-stroke:0.2px #2b2b2b">EMPL...</div>
<div class="t " style="left:909.8px;top:804.87px;font-size:20px;color:#2b2b2b;font-weight:400;-webkit-text-stroke:0.2px #2b2b2b">EMPLOYEE</div>
<div class="t " style="left:1104.4px;top:804.87px;font-size:20px;color:#2b2b2b;font-weight:400;-webkit-text-stroke:0.2px #2b2b2b">BUSINESS ...</div>
<div class="t " style="left:1297.8px;top:804.87px;font-size:20px;color:#2b2b2b;font-weight:400;-webkit-text-stroke:0.2px #2b2b2b">DEPARTME...</div>
<div class="t " style="left:1492px;top:804.87px;font-size:20px;color:#2b2b2b;font-weight:400;-webkit-text-stroke:0.2px #2b2b2b">LOCATION</div>
<div class="t " style="left:1685.8px;top:804.87px;font-size:20px;color:#2b2b2b;font-weight:400;-webkit-text-stroke:0.2px #2b2b2b">EXPE...</div>
<div class="t " style="left:1832px;top:804.87px;font-size:20px;color:#2b2b2b;font-weight:400;-webkit-text-stroke:0.2px #2b2b2b">APPROVED...</div>
<div class="t " style="left:2026px;top:804.87px;font-size:20px;color:#2b2b2b;font-weight:400;-webkit-text-stroke:0.2px #2b2b2b">CLAIM STA...</div>
<div class="t " style="left:2219.7px;top:804.87px;font-size:20px;color:#2b2b2b;font-weight:400;-webkit-text-stroke:0.2px #2b2b2b">ACTION TA...</div>
<div class="t " style="left:2414px;top:804.87px;font-size:20px;color:#2b2b2b;font-weight:400;-webkit-text-stroke:0.2px #2b2b2b">WAITING ON</div>
<div class="t " style="left:2607.7px;top:804.87px;font-size:20px;color:#2b2b2b;font-weight:400;-webkit-text-stroke:0.2px #2b2b2b">ACTIONS</div>
<svg style="left:469px;top:808px" width="21" height="12" viewBox="0 0 21 12"><path d="M1 1 L10.5 11 L20 1" stroke="#a3aab6" stroke-width="1.8" fill="none"/></svg>
<div style="position:absolute;left:280px;top:891px;width:32px;height:32px;border:3px solid #a3aab6;border-radius:5px;box-sizing:border-box;background:#fff"></div>
<div class="t" style="left:404px;top:895.84px;width:141.5px;overflow:hidden;font-size:25px;color:#3b7dc4;transform:scaleX(0.94);transform-origin:0 0">#Ex_151</div>
<div class="t" style="left:570px;top:875.84px;width:157.4px;overflow:hidden;font-size:25px;color:#3b7dc4;transform:scaleX(1.02);transform-origin:0 0">Travel to Client visit</div>
<div class="t" style="left:570px;top:915.53px;width:163.8px;overflow:hidden;font-size:23px;color:#6f6f6f;transform:scaleX(0.98);transform-origin:0 0">On 09 May, 2023</div>
<div class="t" style="left:764.3px;top:895.84px;width:121.2px;overflow:hidden;font-size:25px;color:#262626;transform:scaleX(0.93);transform-origin:0 0">3152</div>
<div class="t" style="left:909.8px;top:875.84px;width:125.7px;overflow:hidden;font-size:25px;color:#3b7dc4;transform:scaleX(1.02);transform-origin:0 0">Gopi Nandan</div>
<div class="t" style="left:909.8px;top:915.53px;width:130.8px;overflow:hidden;font-size:23px;color:#6f6f6f;transform:scaleX(0.98);transform-origin:0 0">HR Lead</div>
<div class="t" style="left:1104.4px;top:895.84px;width:125.1px;overflow:hidden;font-size:25px;color:#262626;transform:scaleX(1.02);transform-origin:0 0">Services Division</div>
<div class="t" style="left:1297.8px;top:895.84px;width:156.1px;overflow:hidden;font-size:25px;color:#262626;transform:scaleX(1.02);transform-origin:0 0">Human Resources</div>
<div class="t" style="left:1492px;top:895.84px;width:125.5px;overflow:hidden;font-size:25px;color:#262626;transform:scaleX(1.02);transform-origin:0 0">Hyderabad</div>
<div class="t" style="left:1685.8px;top:895.84px;width:110.0px;overflow:hidden;font-size:25px;color:#262626;transform:scaleX(1.02);transform-origin:0 0">1</div>
<div class="t" style="left:1832px;top:895.84px;width:146.4px;overflow:hidden;font-size:25px;color:#262626;transform:scaleX(1.1);transform-origin:0 0">INR 544 of 544</div>
<div class="t" style="left:2026px;top:895.84px;width:125.5px;overflow:hidden;font-size:25px;color:#262626;transform:scaleX(1.02);transform-origin:0 0">In Approval</div>
<div class="t" style="left:2219.7px;top:877.84px;width:125.3px;overflow:hidden;font-size:25px;color:#262626;transform:scaleX(1.02);transform-origin:0 0">Gopi Nandan</div>
<div class="t" style="left:2219.7px;top:915.53px;width:130.4px;overflow:hidden;font-size:23px;color:#6f6f6f;transform:scaleX(0.98);transform-origin:0 0">On 09 May, 2023</div>
<div class="t" style="left:2414px;top:895.84px;width:125.5px;overflow:hidden;font-size:25px;color:#262626;transform:scaleX(1.02);transform-origin:0 0">Gopi Nandan</div>
<svg style="left:2615.7px;top:886px" width="40" height="40" viewBox="0 0 40 40"><circle cx="20" cy="20" r="18.5" fill="none" stroke="#7dc06b" stroke-width="2.5"/><path d="M12 20.5 L17.5 26 L28 15" stroke="#7dc06b" stroke-width="2.5" fill="none"/></svg>
<svg style="left:2679.6px;top:886px" width="40" height="40" viewBox="0 0 40 40"><circle cx="20" cy="20" r="18.5" fill="none" stroke="#e8645f" stroke-width="2.5"/><path d="M14 14 L26 26 M26 14 L14 26" stroke="#e8645f" stroke-width="2.5" fill="none"/></svg>
<svg style="left:2746px;top:901px" width="28" height="10" viewBox="0 0 28 10"><circle cx="4.5" cy="5" r="3.2" fill="none" stroke="#9aa3b0" stroke-width="1.6"/><circle cx="14" cy="5" r="3.2" fill="none" stroke="#9aa3b0" stroke-width="1.6"/><circle cx="23.5" cy="5" r="3.2" fill="none" stroke="#9aa3b0" stroke-width="1.6"/></svg>
<div style="position:absolute;left:280px;top:1019px;width:32px;height:32px;border:3px solid #a3aab6;border-radius:5px;box-sizing:border-box;background:#fff"></div>
<div class="t" style="left:404px;top:1023.84px;width:141.5px;overflow:hidden;font-size:25px;color:#3b7dc4;transform:scaleX(0.94);transform-origin:0 0">#Ex_149</div>
<div class="t" style="left:570px;top:1003.84px;width:157.4px;overflow:hidden;font-size:25px;color:#3b7dc4;transform:scaleX(1.02);transform-origin:0 0">dsf</div>
<div class="t" style="left:570px;top:1043.53px;width:163.8px;overflow:hidden;font-size:23px;color:#6f6f6f;transform:scaleX(0.98);transform-origin:0 0">On 22 Aug, 2023</div>
<div class="t" style="left:764.3px;top:1023.84px;width:121.2px;overflow:hidden;font-size:25px;color:#262626;transform:scaleX(0.93);transform-origin:0 0">3152</div>
<div class="t" style="left:909.8px;top:1003.84px;width:125.7px;overflow:hidden;font-size:25px;color:#3b7dc4;transform:scaleX(1.02);transform-origin:0 0">Gopi Nandan</div>
<div class="t" style="left:909.8px;top:1043.53px;width:130.8px;overflow:hidden;font-size:23px;color:#6f6f6f;transform:scaleX(0.98);transform-origin:0 0">HR Lead</div>
<div class="t" style="left:1104.4px;top:1023.84px;width:125.1px;overflow:hidden;font-size:25px;color:#262626;transform:scaleX(1.02);transform-origin:0 0">Services Division</div>
<div class="t" style="left:1297.8px;top:1023.84px;width:156.1px;overflow:hidden;font-size:25px;color:#262626;transform:scaleX(1.02);transform-origin:0 0">Human Resources</div>
<div class="t" style="left:1492px;top:1023.84px;width:125.5px;overflow:hidden;font-size:25px;color:#262626;transform:scaleX(1.02);transform-origin:0 0">Hyderabad</div>
<div class="t" style="left:1685.8px;top:1023.84px;width:110.0px;overflow:hidden;font-size:25px;color:#262626;transform:scaleX(1.02);transform-origin:0 0">1</div>
<div class="t" style="left:1832px;top:1023.84px;width:146.4px;overflow:hidden;font-size:25px;color:#262626;transform:scaleX(1.1);transform-origin:0 0">INR 0 of 4,835</div>
<div class="t" style="left:2026px;top:1023.84px;width:125.5px;overflow:hidden;font-size:25px;color:#262626;transform:scaleX(1.02);transform-origin:0 0">Waiting for</div>
<div class="t" style="left:2414px;top:1023.84px;width:125.5px;overflow:hidden;font-size:25px;color:#262626;transform:scaleX(1.02);transform-origin:0 0">Vihaan Ram</div>
<svg style="left:2615.7px;top:1014px" width="40" height="40" viewBox="0 0 40 40"><circle cx="20" cy="20" r="18.5" fill="none" stroke="#7dc06b" stroke-width="2.5"/><path d="M12 20.5 L17.5 26 L28 15" stroke="#7dc06b" stroke-width="2.5" fill="none"/></svg>
<svg style="left:2679.6px;top:1014px" width="40" height="40" viewBox="0 0 40 40"><circle cx="20" cy="20" r="18.5" fill="none" stroke="#e8645f" stroke-width="2.5"/><path d="M14 14 L26 26 M26 14 L14 26" stroke="#e8645f" stroke-width="2.5" fill="none"/></svg>
<svg style="left:2746px;top:1029px" width="28" height="10" viewBox="0 0 28 10"><circle cx="4.5" cy="5" r="3.2" fill="none" stroke="#9aa3b0" stroke-width="1.6"/><circle cx="14" cy="5" r="3.2" fill="none" stroke="#9aa3b0" stroke-width="1.6"/><circle cx="23.5" cy="5" r="3.2" fill="none" stroke="#9aa3b0" stroke-width="1.6"/></svg>
<div style="position:absolute;left:280px;top:1147px;width:32px;height:32px;border:3px solid #a3aab6;border-radius:5px;box-sizing:border-box;background:#fff"></div>
<div class="t" style="left:404px;top:1151.84px;width:141.5px;overflow:hidden;font-size:25px;color:#3b7dc4;transform:scaleX(0.94);transform-origin:0 0">#148</div>
<div class="t" style="left:570px;top:1131.84px;width:157.4px;overflow:hidden;font-size:25px;color:#3b7dc4;transform:scaleX(1.02);transform-origin:0 0">fuel for commute</div>
<div class="t" style="left:570px;top:1171.53px;width:163.8px;overflow:hidden;font-size:23px;color:#6f6f6f;transform:scaleX(0.98);transform-origin:0 0">On 14 Apr, 2022</div>
<div class="t" style="left:764.3px;top:1151.84px;width:121.2px;overflow:hidden;font-size:25px;color:#262626;transform:scaleX(0.93);transform-origin:0 0">3152</div>
<div class="t" style="left:909.8px;top:1131.84px;width:125.7px;overflow:hidden;font-size:25px;color:#3b7dc4;transform:scaleX(1.02);transform-origin:0 0">Gopi Nandan</div>
<div class="t" style="left:909.8px;top:1171.53px;width:130.8px;overflow:hidden;font-size:23px;color:#6f6f6f;transform:scaleX(0.98);transform-origin:0 0">HR Lead</div>
<div class="t" style="left:1104.4px;top:1151.84px;width:125.1px;overflow:hidden;font-size:25px;color:#262626;transform:scaleX(1.02);transform-origin:0 0">Services Division</div>
<div class="t" style="left:1297.8px;top:1151.84px;width:156.1px;overflow:hidden;font-size:25px;color:#262626;transform:scaleX(1.02);transform-origin:0 0">Human Resources</div>
<div class="t" style="left:1492px;top:1151.84px;width:125.5px;overflow:hidden;font-size:25px;color:#262626;transform:scaleX(1.02);transform-origin:0 0">Hyderabad</div>
<div class="t" style="left:1685.8px;top:1151.84px;width:110.0px;overflow:hidden;font-size:25px;color:#262626;transform:scaleX(1.02);transform-origin:0 0">1</div>
<div class="t" style="left:1832px;top:1151.84px;width:146.4px;overflow:hidden;font-size:25px;color:#262626;transform:scaleX(1.1);transform-origin:0 0">INR 0 of 200</div>
<div class="t" style="left:2026px;top:1151.84px;width:125.5px;overflow:hidden;font-size:25px;color:#262626;transform:scaleX(1.02);transform-origin:0 0">Waiting for</div>
<div class="t" style="left:2414px;top:1151.84px;width:125.5px;overflow:hidden;font-size:25px;color:#262626;transform:scaleX(1.02);transform-origin:0 0">Vihaan Ram</div>
<svg style="left:2615.7px;top:1142px" width="40" height="40" viewBox="0 0 40 40"><circle cx="20" cy="20" r="18.5" fill="none" stroke="#7dc06b" stroke-width="2.5"/><path d="M12 20.5 L17.5 26 L28 15" stroke="#7dc06b" stroke-width="2.5" fill="none"/></svg>
<svg style="left:2679.6px;top:1142px" width="40" height="40" viewBox="0 0 40 40"><circle cx="20" cy="20" r="18.5" fill="none" stroke="#e8645f" stroke-width="2.5"/><path d="M14 14 L26 26 M26 14 L14 26" stroke="#e8645f" stroke-width="2.5" fill="none"/></svg>
<svg style="left:2746px;top:1157px" width="28" height="10" viewBox="0 0 28 10"><circle cx="4.5" cy="5" r="3.2" fill="none" stroke="#9aa3b0" stroke-width="1.6"/><circle cx="14" cy="5" r="3.2" fill="none" stroke="#9aa3b0" stroke-width="1.6"/><circle cx="23.5" cy="5" r="3.2" fill="none" stroke="#9aa3b0" stroke-width="1.6"/></svg>
<div style="position:absolute;left:280px;top:1275px;width:32px;height:32px;border:3px solid #a3aab6;border-radius:5px;box-sizing:border-box;background:#fff"></div>
<div class="t" style="left:404px;top:1279.84px;width:141.5px;overflow:hidden;font-size:25px;color:#3b7dc4;transform:scaleX(0.94);transform-origin:0 0">#141</div>
<div class="t" style="left:570px;top:1259.84px;width:157.4px;overflow:hidden;font-size:25px;color:#3b7dc4;transform:scaleX(1.02);transform-origin:0 0">Travel Claim</div>
<div class="t" style="left:570px;top:1299.53px;width:163.8px;overflow:hidden;font-size:23px;color:#6f6f6f;transform:scaleX(0.98);transform-origin:0 0">On 14 Mar, 2022</div>
<div class="t" style="left:764.3px;top:1279.84px;width:121.2px;overflow:hidden;font-size:25px;color:#262626;transform:scaleX(0.93);transform-origin:0 0">2089</div>
<div class="t" style="left:909.8px;top:1259.84px;width:125.7px;overflow:hidden;font-size:25px;color:#3b7dc4;transform:scaleX(1.02);transform-origin:0 0">Jayanthi Sharma</div>
<div class="t" style="left:909.8px;top:1299.53px;width:130.8px;overflow:hidden;font-size:23px;color:#6f6f6f;transform:scaleX(0.98);transform-origin:0 0">HR Executive</div>
<div class="t" style="left:1104.4px;top:1279.84px;width:125.1px;overflow:hidden;font-size:25px;color:#262626;transform:scaleX(1.02);transform-origin:0 0">Products Division</div>
<div class="t" style="left:1297.8px;top:1279.84px;width:156.1px;overflow:hidden;font-size:25px;color:#262626;transform:scaleX(1.02);transform-origin:0 0">Human Resources</div>
<div class="t" style="left:1492px;top:1279.84px;width:125.5px;overflow:hidden;font-size:25px;color:#262626;transform:scaleX(1.02);transform-origin:0 0">Delhi</div>
<div class="t" style="left:1685.8px;top:1279.84px;width:110.0px;overflow:hidden;font-size:25px;color:#262626;transform:scaleX(1.02);transform-origin:0 0">1</div>
<div class="t" style="left:1832px;top:1279.84px;width:146.4px;overflow:hidden;font-size:25px;color:#262626;transform:scaleX(1.1);transform-origin:0 0">INR 0 of 420</div>
<div class="t" style="left:2026px;top:1279.84px;width:125.5px;overflow:hidden;font-size:25px;color:#262626;transform:scaleX(1.02);transform-origin:0 0">Waiting for</div>
<div class="t" style="left:2414px;top:1279.84px;width:125.5px;overflow:hidden;font-size:25px;color:#262626;transform:scaleX(1.02);transform-origin:0 0">Vihaan Ram</div>
<svg style="left:2615.7px;top:1270px" width="40" height="40" viewBox="0 0 40 40"><circle cx="20" cy="20" r="18.5" fill="none" stroke="#7dc06b" stroke-width="2.5"/><path d="M12 20.5 L17.5 26 L28 15" stroke="#7dc06b" stroke-width="2.5" fill="none"/></svg>
<svg style="left:2679.6px;top:1270px" width="40" height="40" viewBox="0 0 40 40"><circle cx="20" cy="20" r="18.5" fill="none" stroke="#e8645f" stroke-width="2.5"/><path d="M14 14 L26 26 M26 14 L14 26" stroke="#e8645f" stroke-width="2.5" fill="none"/></svg>
<svg style="left:2746px;top:1285px" width="28" height="10" viewBox="0 0 28 10"><circle cx="4.5" cy="5" r="3.2" fill="none" stroke="#9aa3b0" stroke-width="1.6"/><circle cx="14" cy="5" r="3.2" fill="none" stroke="#9aa3b0" stroke-width="1.6"/><circle cx="23.5" cy="5" r="3.2" fill="none" stroke="#9aa3b0" stroke-width="1.6"/></svg>
<div style="position:absolute;left:280px;top:1403px;width:32px;height:32px;border:3px solid #a3aab6;border-radius:5px;box-sizing:border-box;background:#fff"></div>
<div class="t" style="left:404px;top:1407.84px;width:141.5px;overflow:hidden;font-size:25px;color:#3b7dc4;transform:scaleX(0.94);transform-origin:0 0">#139</div>
<div class="t" style="left:570px;top:1387.84px;width:157.4px;overflow:hidden;font-size:25px;color:#3b7dc4;transform:scaleX(1.02);transform-origin:0 0">Monthly cab bill</div>
<div class="t" style="left:570px;top:1427.53px;width:163.8px;overflow:hidden;font-size:23px;color:#6f6f6f;transform:scaleX(0.98);transform-origin:0 0">On 06 Apr, 2022</div>
<div class="t" style="left:764.3px;top:1407.84px;width:121.2px;overflow:hidden;font-size:25px;color:#262626;transform:scaleX(0.93);transform-origin:0 0">3156</div>
<div class="t" style="left:909.8px;top:1387.84px;width:125.7px;overflow:hidden;font-size:25px;color:#3b7dc4;transform:scaleX(1.02);transform-origin:0 0">Jayatri Siddharth</div>
<div class="t" style="left:909.8px;top:1427.53px;width:130.8px;overflow:hidden;font-size:23px;color:#6f6f6f;transform:scaleX(0.98);transform-origin:0 0">Intern</div>
<div class="t" style="left:1104.4px;top:1407.84px;width:125.1px;overflow:hidden;font-size:25px;color:#262626;transform:scaleX(1.02);transform-origin:0 0">Products Division</div>
<div class="t" style="left:1297.8px;top:1407.84px;width:156.1px;overflow:hidden;font-size:25px;color:#262626;transform:scaleX(1.02);transform-origin:0 0">Management</div>
<div class="t" style="left:1492px;top:1407.84px;width:125.5px;overflow:hidden;font-size:25px;color:#262626;transform:scaleX(1.02);transform-origin:0 0">Hyderabad</div>
<div class="t" style="left:1685.8px;top:1407.84px;width:110.0px;overflow:hidden;font-size:25px;color:#262626;transform:scaleX(1.02);transform-origin:0 0">1</div>
<div class="t" style="left:1832px;top:1407.84px;width:146.4px;overflow:hidden;font-size:25px;color:#262626;transform:scaleX(1.1);transform-origin:0 0">INR 0 of 96</div>
<div class="t" style="left:2026px;top:1407.84px;width:125.5px;overflow:hidden;font-size:25px;color:#262626;transform:scaleX(1.02);transform-origin:0 0">Waiting for</div>
<div class="t" style="left:2414px;top:1407.84px;width:125.5px;overflow:hidden;font-size:25px;color:#262626;transform:scaleX(1.02);transform-origin:0 0">Vihaan Ram</div>
<svg style="left:2615.7px;top:1398px" width="40" height="40" viewBox="0 0 40 40"><circle cx="20" cy="20" r="18.5" fill="none" stroke="#7dc06b" stroke-width="2.5"/><path d="M12 20.5 L17.5 26 L28 15" stroke="#7dc06b" stroke-width="2.5" fill="none"/></svg>
<svg style="left:2679.6px;top:1398px" width="40" height="40" viewBox="0 0 40 40"><circle cx="20" cy="20" r="18.5" fill="none" stroke="#e8645f" stroke-width="2.5"/><path d="M14 14 L26 26 M26 14 L14 26" stroke="#e8645f" stroke-width="2.5" fill="none"/></svg>
<svg style="left:2746px;top:1413px" width="28" height="10" viewBox="0 0 28 10"><circle cx="4.5" cy="5" r="3.2" fill="none" stroke="#9aa3b0" stroke-width="1.6"/><circle cx="14" cy="5" r="3.2" fill="none" stroke="#9aa3b0" stroke-width="1.6"/><circle cx="23.5" cy="5" r="3.2" fill="none" stroke="#9aa3b0" stroke-width="1.6"/></svg>
<div style="position:absolute;left:280px;top:1531px;width:32px;height:32px;border:3px solid #a3aab6;border-radius:5px;box-sizing:border-box;background:#fff"></div>
<div class="t" style="left:404px;top:1535.84px;width:141.5px;overflow:hidden;font-size:25px;color:#3b7dc4;transform:scaleX(0.94);transform-origin:0 0">#136</div>
<div class="t" style="left:570px;top:1515.84px;width:157.4px;overflow:hidden;font-size:25px;color:#3b7dc4;transform:scaleX(1.02);transform-origin:0 0">Parking Tax for</div>
<div class="t" style="left:570px;top:1555.53px;width:163.8px;overflow:hidden;font-size:23px;color:#6f6f6f;transform:scaleX(0.98);transform-origin:0 0">On 05 Feb, 2022</div>
<div class="t" style="left:764.3px;top:1535.84px;width:121.2px;overflow:hidden;font-size:25px;color:#262626;transform:scaleX(0.93);transform-origin:0 0">3152</div>
<div class="t" style="left:909.8px;top:1515.84px;width:125.7px;overflow:hidden;font-size:25px;color:#3b7dc4;transform:scaleX(1.02);transform-origin:0 0">Gopi Nandan</div>
<div class="t" style="left:909.8px;top:1555.53px;width:130.8px;overflow:hidden;font-size:23px;color:#6f6f6f;transform:scaleX(0.98);transform-origin:0 0">HR Lead</div>
<div class="t" style="left:1104.4px;top:1535.84px;width:125.1px;overflow:hidden;font-size:25px;color:#262626;transform:scaleX(1.02);transform-origin:0 0">Services Division</div>
<div class="t" style="left:1297.8px;top:1535.84px;width:156.1px;overflow:hidden;font-size:25px;color:#262626;transform:scaleX(1.02);transform-origin:0 0">Human Resources</div>
<div class="t" style="left:1492px;top:1535.84px;width:125.5px;overflow:hidden;font-size:25px;color:#262626;transform:scaleX(1.02);transform-origin:0 0">Hyderabad</div>
<div class="t" style="left:1685.8px;top:1535.84px;width:110.0px;overflow:hidden;font-size:25px;color:#262626;transform:scaleX(1.02);transform-origin:0 0">1</div>
<div class="t" style="left:1832px;top:1535.84px;width:146.4px;overflow:hidden;font-size:25px;color:#262626;transform:scaleX(1.1);transform-origin:0 0">INR 0 of 200</div>
<div class="t" style="left:2026px;top:1535.84px;width:125.5px;overflow:hidden;font-size:25px;color:#262626;transform:scaleX(1.02);transform-origin:0 0">Waiting for</div>
<div class="t" style="left:2414px;top:1535.84px;width:125.5px;overflow:hidden;font-size:25px;color:#262626;transform:scaleX(1.02);transform-origin:0 0">Vihaan Ram</div>
<svg style="left:2615.7px;top:1526px" width="40" height="40" viewBox="0 0 40 40"><circle cx="20" cy="20" r="18.5" fill="none" stroke="#7dc06b" stroke-width="2.5"/><path d="M12 20.5 L17.5 26 L28 15" stroke="#7dc06b" stroke-width="2.5" fill="none"/></svg>
<svg style="left:2679.6px;top:1526px" width="40" height="40" viewBox="0 0 40 40"><circle cx="20" cy="20" r="18.5" fill="none" stroke="#e8645f" stroke-width="2.5"/><path d="M14 14 L26 26 M26 14 L14 26" stroke="#e8645f" stroke-width="2.5" fill="none"/></svg>
<svg style="left:2746px;top:1541px" width="28" height="10" viewBox="0 0 28 10"><circle cx="4.5" cy="5" r="3.2" fill="none" stroke="#9aa3b0" stroke-width="1.6"/><circle cx="14" cy="5" r="3.2" fill="none" stroke="#9aa3b0" stroke-width="1.6"/><circle cx="23.5" cy="5" r="3.2" fill="none" stroke="#9aa3b0" stroke-width="1.6"/></svg>
<svg style="left:0;top:0" width="2857" height="1641" viewBox="0 0 2857 1641"><rect x="4.6" y="777.8" width="191.6" height="127.4" rx="6" fill="none" stroke="#ee5f5b" stroke-width="8.2"/><rect x="1166.5" y="96.5" width="228" height="91" rx="9" fill="none" stroke="#ee5f5b" stroke-width="7.5"/><rect x="419.5" y="174.5" width="153" height="90" rx="9" fill="none" stroke="#ee5f5b" stroke-width="7.5"/><path d="M199.7 780.8 L234.6 737.6 L240 747.7 L354 689 L358 695 L248 761.3 L254 771 Z" fill="#ee5f5b"/><path d="M1396.5 165.8 L1447.8 147 L1447.8 161.5 L1595.8 164.8 L1595.8 171.7 L1447.8 175.5 L1447.8 186.5 Z" fill="#ee5f5b"/><path d="M576.7 235.6 L630.5 220.8 L629.5 233 L785.6 253 L785.6 258.7 L627.5 248.5 L627 259.9 Z" fill="#ee5f5b"/></svg>
<svg style="left:0;top:0" width="2857" height="1641" viewBox="0 0 2857 1641">
<path d="M362 671.5 L369.4 666 L373.8 666 L373.8 694.8 L369.4 694.8 L369.4 671.5 L362 676.2 Z" fill="#ee5f5b"/>
<path d="M1602.4 157.5 C1602.4 152 1605.5 150.4 1610 150.4 C1614.8 150.4 1617.6 153.2 1617.6 157 C1617.6 160.5 1615.8 162.8 1613 165.5 L1602.6 175.5 L1619.8 175.5" fill="none" stroke="#ee5f5b" stroke-width="4.2" stroke-linejoin="miter"/>
<path d="M796.6 249.6 C796.8 245.6 799.8 243.6 804.4 243.6 C808.8 243.6 811.6 246 811.6 249.6 C811.6 253.4 808.6 256 804.4 256 L800.3 256 M804.4 256 C809.6 256 812.6 259 812.6 263.2 C812.6 267.2 809.2 269.3 804.4 269.3 C799.6 269.3 796.2 267.2 795.4 263.2" fill="none" stroke="#ee5f5b" stroke-width="4.1"/>
</svg>
</body></html>
